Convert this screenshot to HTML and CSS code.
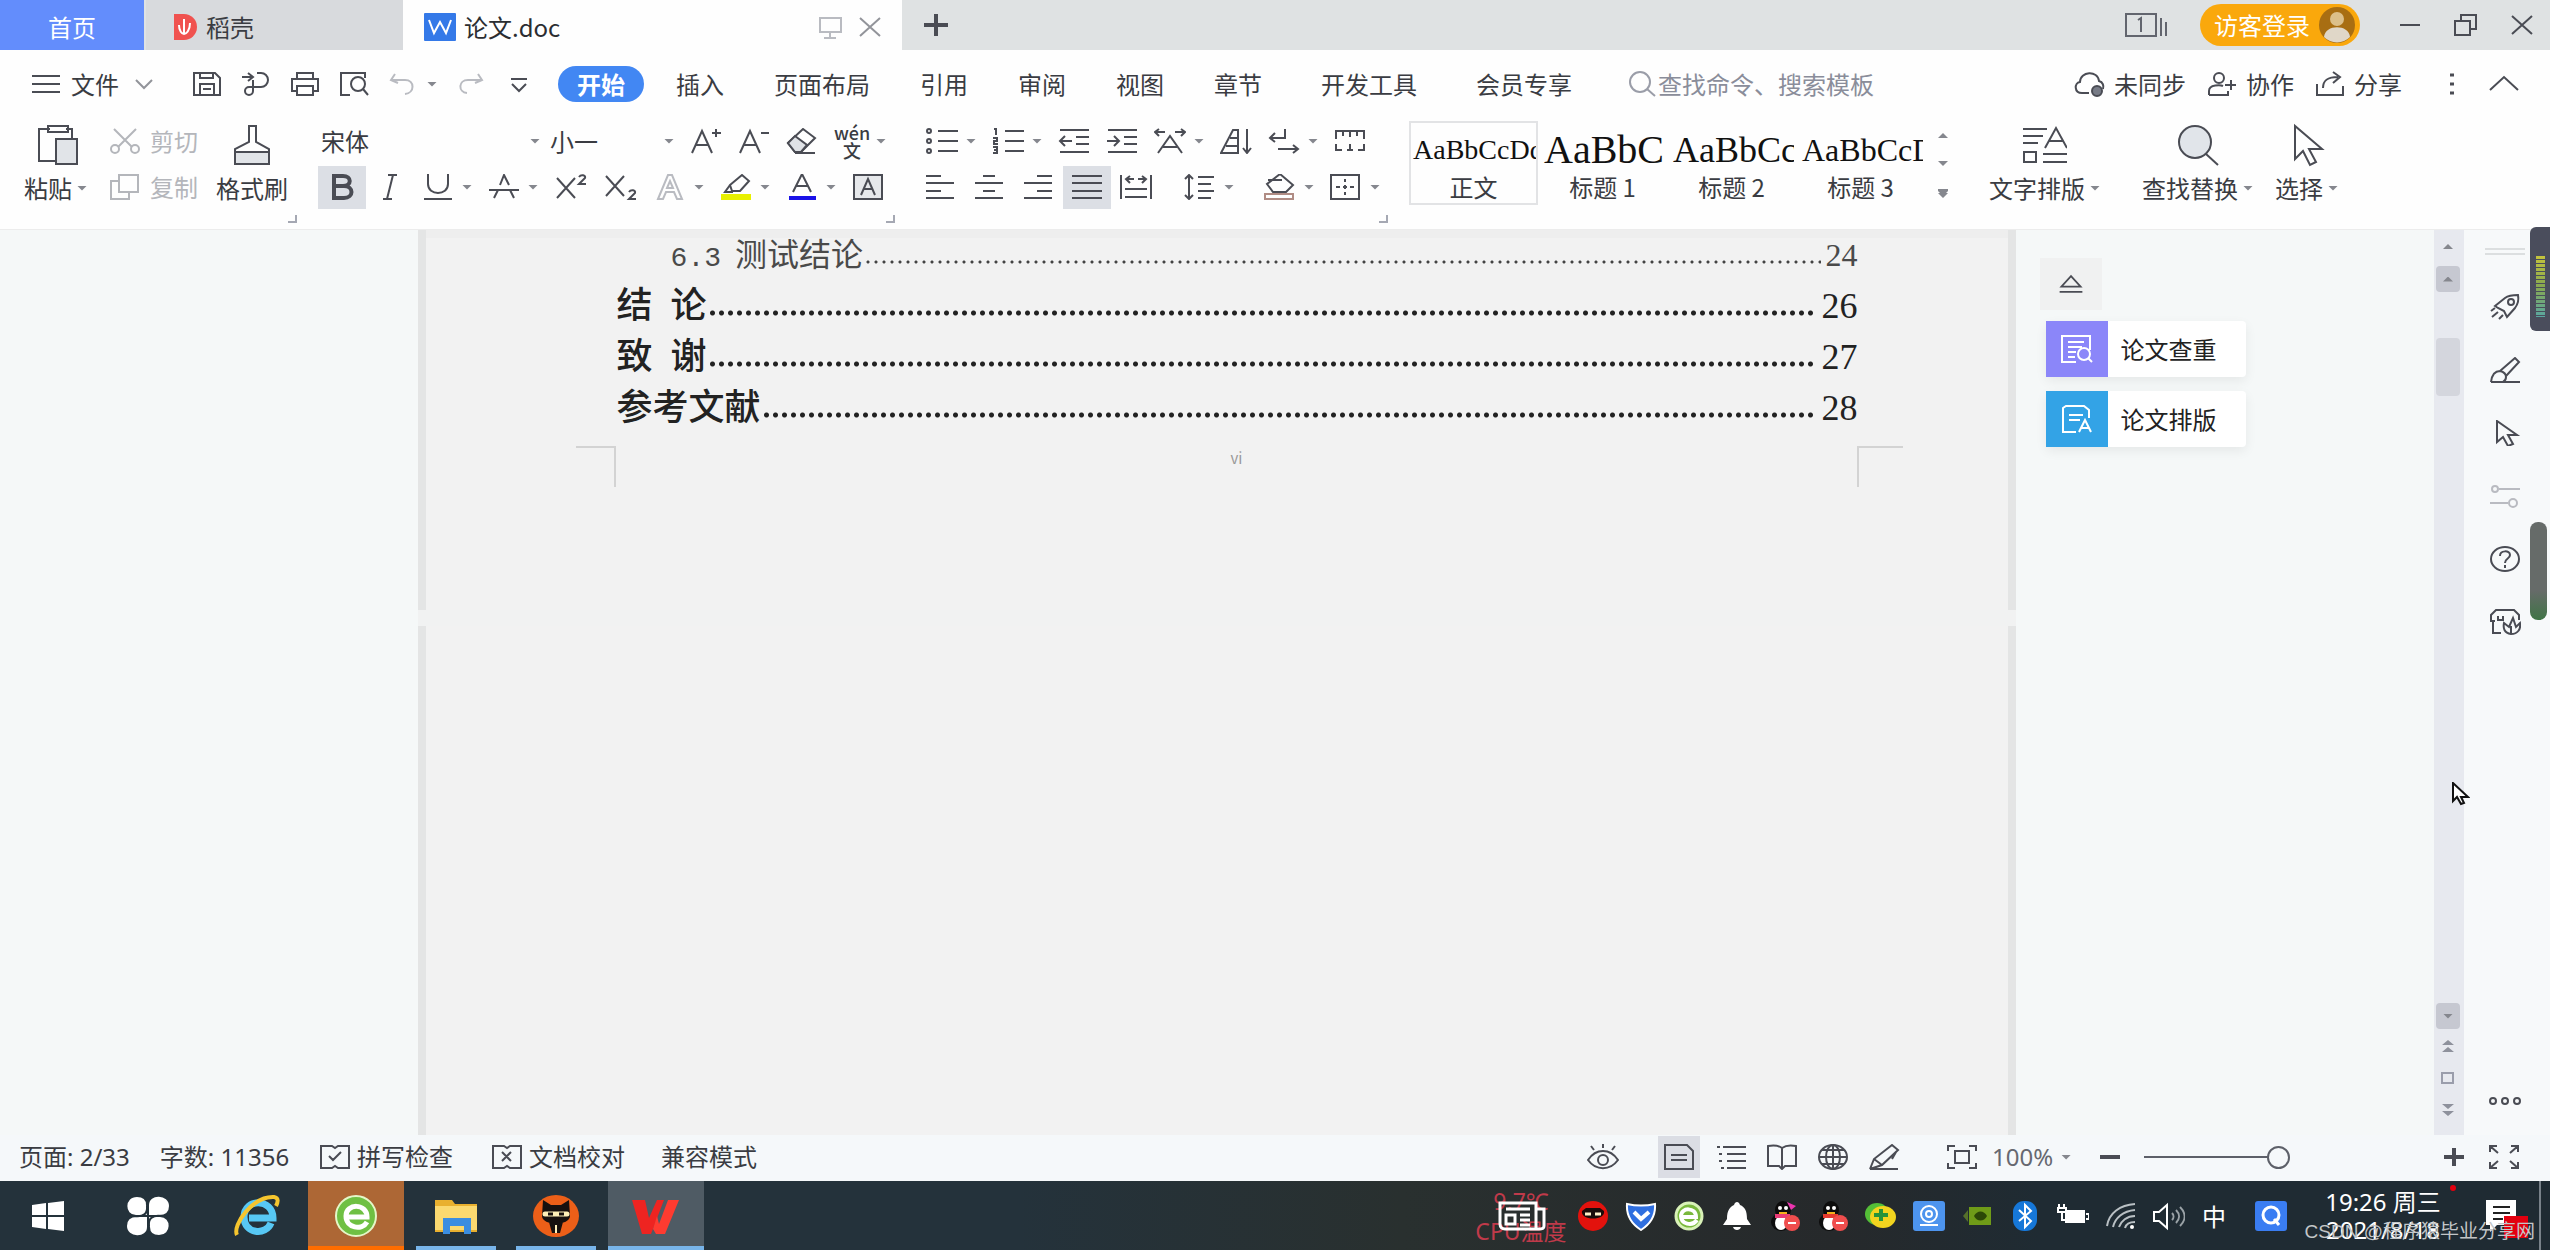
FILE: index.html
```
<!DOCTYPE html>
<html lang="zh-CN">
	<head>
		<meta charset="UTF-8">
		<title>论文.doc</title>
		<link rel="stylesheet" href="styles.css">
	</head>
	<body>
		<!-- 标签栏 -->
		<div class="titlebar">
			<button class="home">首页</button>
			<button class="doctab">
				<svg class="logo small" viewBox="0 0 24 28"><path d="M0 1h10a13 13 0 0 1 0 26H0z" fill="#f0524f"/><path d="M10 6v15M5 12c0 6 3 9 5 9s6-3 6-11" fill="none" stroke="#fff" stroke-width="2"/></svg>
				<span>稻壳</span>
			</button>
			<div class="doctab current">
				<svg class="logo" viewBox="0 0 32 28"><rect width="32" height="28" rx="1" fill="#3479e8"/><path d="M5 7l5 13 6-11 6 11 5-13" fill="none" stroke="#fff" stroke-width="2"/></svg>
				<span>论文.doc</span>
				<svg class="ico pale push" viewBox="0 0 32 26"><path d="M6 4h21v14H6zM16 18v6M10 24h12"/></svg>
				<button class="icon-btn" aria-label="关闭标签"><svg class="ico mid" viewBox="0 0 32 26"><path d="M6 4l20 18M26 4L6 22"/></svg></button>
			</div>
			<button class="newtab" aria-label="新建"><svg class="ico bold" viewBox="0 0 32 26"><path d="M4 13h24M16 2v22"/></svg></button>
			<div class="window">
				<svg class="pages" viewBox="0 0 44 26"><path d="M2 2h30v22H2zM37 6v18M42 10v14M14 8l3-2v14"/></svg>
				<button class="login">访客登录
					<svg class="avatar" viewBox="0 0 38 38"><circle cx="19" cy="19" r="18" fill="#a86e12"/><circle cx="19" cy="13" r="7" fill="#dcc08a"/><path d="M6 31c1-13 25-13 26 0a18 18 0 0 1-26 0z" fill="#e0d7c8"/></svg>
				</button>
				<button class="winbtn" aria-label="最小化"><svg class="ico" viewBox="0 0 32 26"><path d="M6 13h20"/></svg></button>
				<button class="winbtn" aria-label="还原"><svg class="ico" viewBox="0 0 32 26"><path d="M5 9h15v14H5zM11 9V3h15v14h-6"/></svg></button>
				<button class="winbtn" aria-label="关闭"><svg class="ico" viewBox="0 0 32 26"><path d="M6 4l20 18M26 4L6 22"/></svg></button>
			</div>
		</div>

		<!-- 菜单 -->
		<div class="menubar">
			<button class="file">
				<svg class="ico" viewBox="0 0 32 26"><path d="M2 5h28M2 13h28M2 21h28"/></svg>
				文件
				<svg class="chev" viewBox="0 0 18 12"><path d="M1 2l8 8 8-8"/></svg>
			</button>
			<div class="quick">
				<button aria-label="保存"><svg class="ico" viewBox="0 0 32 26"><path d="M3 2h21l5 5v17H3zM9 2v5h13V2M9 24V13h14v11M12 18h8"/></svg></button>
				<button aria-label="输出"><svg class="ico" viewBox="0 0 32 26"><path d="M2 6h10M8 2l5 4-5 4M17 2h4a7 7 0 0 1 0 14h-8M13 9v11a4 4 0 1 1-4-4h4"/></svg></button>
				<button aria-label="打印"><svg class="ico" viewBox="0 0 32 26"><path d="M8 8V2h16v6M8 20H3V8h26v12h-5M8 15h16v9H8z"/></svg></button>
				<button aria-label="打印预览"><svg class="ico" viewBox="0 0 32 26"><path d="M12 24H3V2h24v5M25 18l5 6"/><circle cx="20" cy="13" r="7"/></svg></button>
				<button aria-label="撤销"><svg class="ico pale" viewBox="0 0 32 26"><path d="M8 3L4 9l7 3M5 9h13c10 0 10 13 0 14"/></svg></button>
				<i class="caret"></i>
				<button aria-label="恢复"><svg class="ico pale" viewBox="0 0 32 26"><path d="M24 3l4 6-7 3M27 9H14C4 9 4 21 13 22"/></svg></button>
				<button aria-label="更多"><svg class="ico" viewBox="0 0 32 26"><path d="M8 8h16M9 13l7 7 7-7"/></svg></button>
			</div>
			<nav class="tabs">
				<button class="on">开始</button>
				<button>插入</button>
				<button>页面布局</button>
				<button>引用</button>
				<button>审阅</button>
				<button>视图</button>
				<button>章节</button>
				<button class="wide">开发工具</button>
				<button class="wide">会员专享</button>
			</nav>
			<label class="search">
				<svg class="ico" viewBox="0 0 32 26"><circle cx="14" cy="11" r="10"/><path d="M21 18l8 7"/></svg>
				<input type="text" placeholder="查找命令、搜索模板" aria-label="查找命令">
			</label>
			<div class="share">
				<button><svg class="ico" viewBox="0 0 32 26"><path d="M15 22H8C0 22 0 12 6 11C6 0 24-1 25 10c4 1 5 5 4 8"/><circle cx="23" cy="20" r="5" fill="#777b86"/></svg>未同步</button>
				<button><svg class="ico" viewBox="0 0 32 26"><circle cx="13" cy="7" r="5"/><path d="M3 24v-4c0-7 12-6 14-5M3 24h19v-4M19 14h11M25 9v10"/></svg>协作</button>
				<button><svg class="ico" viewBox="0 0 32 26"><path d="M3 13v11h26v-9M9 17c0-8 5-11 15-11M19 1l7 5-7 6"/></svg>分享</button>
				<button class="dots" aria-label="更多"><svg class="ico" viewBox="0 0 32 26"><path d="M14 4h4M14 13h4M14 22h4" stroke-width="3"/></svg></button>
				<button aria-label="收起"><svg class="ico" viewBox="0 0 32 26"><path d="M2 19L16 6l14 13"/></svg></button>
			</div>
		</div>

		<!-- 功能区 -->
		<div class="ribbon">
			<div class="group clip">
				<button class="big">
					<svg viewBox="0 0 44 44"><path d="M14 6H3v32h17M30 6h6v10M12 3h20v6H12z"/><path d="M20 16h21v25H20z" fill="#e1e4e8"/></svg>
					<span>粘贴<i class="caret"></i></span>
				</button>
				<div class="stack">
					<button class="dim"><svg class="ico" viewBox="0 0 32 26"><path d="M5 1l18 18M27 1L9 19"/><circle cx="6" cy="21" r="4"/><circle cx="26" cy="21" r="4"/></svg>剪切</button>
					<button class="dim"><svg class="ico" viewBox="0 0 32 26"><path d="M10 1h19v17H10zM10 7H2v18h18v-7"/></svg>复制</button>
				</div>
				<button class="big brush">
					<svg viewBox="0 0 44 44"><path d="M19 3h7v16l13 7v15H5V26l14-7z"/><path d="M5 29h34v12H5z" fill="#e1e4e8"/></svg>
					<span>格式刷</span>
				</button>
				<i class="corner"></i>
			</div>

			<div class="group font">
				<div class="row">
					<select class="face" aria-label="字体"><option>宋体</option></select><i class="caret"></i>
					<select class="size" aria-label="字号"><option>小一</option></select><i class="caret"></i>
					<button aria-label="增大字号"><svg class="ico" viewBox="0 0 32 26"><path d="M2 25L12 3l10 22M6 17h12M22 5h9M26 1v8"/></svg></button>
					<button aria-label="减小字号"><svg class="ico" viewBox="0 0 32 26"><path d="M2 25L12 3l10 22M6 17h12M23 5h8"/></svg></button>
					<button aria-label="清除格式"><svg class="ico" viewBox="0 0 32 26"><path d="M2 15L17 1l12 9-14 14H9zM9 25h20"/><path d="M2 15l7-7 12 9-6 7H9z" fill="#dfe2e6"/></svg></button>
					<button class="pinyin" aria-label="拼音指南"><b>wén</b><b>文</b></button><i class="caret"></i>
				</div>
				<div class="row">
					<button class="on" aria-label="加粗"><svg class="ico" viewBox="0 0 32 26"><path d="M8 2h9c9 0 9 10 0 10H8zM8 12h10c10 0 10 12 0 12H8z" stroke-width="4"/></svg></button>
					<button aria-label="倾斜"><svg class="ico" viewBox="0 0 32 26"><path d="M14 1h9M9 25h9M19 1l-6 24"/></svg></button>
					<button aria-label="下划线"><svg class="ico" viewBox="0 0 32 26"><path d="M6 0v10c0 12 20 12 20 0V0M2 25h28"/></svg></button><i class="caret"></i>
					<button aria-label="删除线"><svg class="ico" viewBox="0 0 32 26"><path d="M6 24l4-8M12 11l4-10 5 10M22 16l4 8M1 16h30"/></svg></button><i class="caret"></i>
					<button class="xs" aria-label="上标"><svg class="ico" viewBox="0 0 32 26"><path d="M2 4l18 20M20 4L2 24M24 3c2-3 7-2 6 1l-6 6h7"/></svg></button>
					<button class="xs" aria-label="下标"><svg class="ico" viewBox="0 0 32 26"><path d="M1 2l18 20M19 2L1 22M24 18c2-3 7-2 6 1l-6 6h7"/></svg></button>
					<button aria-label="文字效果"><svg class="ico pale" viewBox="0 0 32 26"><path d="M4 25L14 1h4l10 24h-5l-3-7h-8l-3 7zM13 14h6l-3-7z"/></svg></button><i class="caret"></i>
					<button aria-label="突出显示"><svg class="ico" viewBox="0 0 32 26"><path d="M10 11L22 1l7 6-9 10h-8zM10 11l-5 7h8"/><path d="M1 23h30" stroke="#e8f000" stroke-width="6"/></svg></button><i class="caret"></i>
					<button aria-label="字体颜色"><svg class="ico" viewBox="0 0 32 26"><path d="M7 18L16 0l9 18M10 12h12"/><path d="M3 24h27" stroke="#1a12e8" stroke-width="4"/></svg></button><i class="caret"></i>
					<button aria-label="字符底纹"><svg class="ico" viewBox="0 0 32 26"><path d="M2 1h28v24H2z" fill="#e6e8eb"/><path d="M9 21l7-16 7 16M11 15h10"/></svg></button>
				</div>
				<i class="corner"></i>
			</div>

			<div class="group para">
				<div class="row">
					<button aria-label="项目符号"><svg class="ico" viewBox="0 0 32 26"><path d="M12 3h20M12 13h20M12 23h20"/><circle cx="3" cy="3" r="2"/><circle cx="3" cy="13" r="2"/><circle cx="3" cy="23" r="2"/></svg></button><i class="caret"></i>
					<button aria-label="编号"><svg class="ico" viewBox="0 0 32 26"><path d="M13 3h19M13 13h19M13 23h19M2 1h2v6M1 10h4v3H2v3h4M1 19h4v6H1M2 22h3"/></svg></button><i class="caret"></i>
					<button aria-label="减少缩进"><svg class="ico" viewBox="0 0 32 26"><path d="M2 2h29M18 9h13M18 16h13M2 24h29M2 13h12M7 8l-5 5 5 5"/></svg></button>
					<button aria-label="增加缩进"><svg class="ico" viewBox="0 0 32 26"><path d="M2 2h29M18 9h13M18 16h13M2 24h29M1 13h12M8 8l5 5-5 5"/></svg></button>
					<button aria-label="中文版式"><svg class="ico" viewBox="0 0 32 26"><path d="M4 25l12-17 12 17M9 19h14M1 4h10M5 1L1 4l4 4M21 4h10M27 1l4 3-4 4"/></svg></button><i class="caret"></i>
					<button aria-label="排序"><svg class="ico" viewBox="0 0 32 26"><path d="M1 25L13 2h5v23zM6 18h12M10 10h8M27 1v24M23 20l4 5 4-5"/></svg></button>
					<button aria-label="换行标记"><svg class="ico" viewBox="0 0 32 26"><path d="M17 1v9H2M7 5l-5 5 5 4M10 21h20M25 17l5 4-5 4"/></svg></button><i class="caret"></i>
					<button aria-label="制表位"><svg class="ico" viewBox="0 0 32 26"><path d="M2 11V3h28v8M9 3v5M16 3v6M23 3v5M2 16v6h6M13 22h6M16 16v6M24 22h6v-6"/></svg></button>
				</div>
				<div class="row tight">
					<button aria-label="左对齐"><svg class="ico" viewBox="0 0 32 26"><path d="M2 2h15M2 9h28M2 17h15M2 24h28"/></svg></button>
					<button aria-label="居中"><svg class="ico" viewBox="0 0 32 26"><path d="M10 2h12M2 9h28M10 17h12M2 24h28"/></svg></button>
					<button aria-label="右对齐"><svg class="ico" viewBox="0 0 32 26"><path d="M15 2h15M2 9h28M15 17h15M2 24h28"/></svg></button>
					<button class="on" aria-label="两端对齐"><svg class="ico" viewBox="0 0 32 26"><path d="M1 2h30M1 9h30M1 17h30M1 24h30"/></svg></button>
					<button aria-label="分散对齐"><svg class="ico" viewBox="0 0 32 26"><path d="M1 1v24M31 1v24M5 15h22M5 23h22M6 5h8M10 2L6 5l4 4M18 5h8M22 2l4 3-4 4"/></svg></button>
					<button class="apart" aria-label="行距"><svg class="ico" viewBox="0 0 32 26"><path d="M6 1v24M2 5l4-4 4 4M2 21l4 4 4-4M15 3h16M15 10h13M15 17h16M15 24h13"/></svg></button><i class="caret"></i>
					<button class="apart" aria-label="底纹"><svg class="ico" viewBox="0 0 32 26"><path d="M5 6h14M17 0L4 10l6 8h13l7-7L17 0M30 11l-9 9"/><path d="M2 20h28v5H2z" stroke="#b08c84"/></svg></button><i class="caret"></i>
					<button aria-label="边框"><svg class="ico" viewBox="0 0 32 26"><path d="M2 1h28v24H2zM16 5v3M16 11v4M16 18v3M7 13h4M21 13h4M14 13h4"/></svg></button><i class="caret"></i>
				</div>
				<i class="corner"></i>
			</div>

			<div class="styles">
				<button class="current"><span class="s0">AaBbCcDd</span><em>正文</em></button>
				<button><span class="s1">AaBbC</span><em>标题 1</em></button>
				<button><span class="s2">AaBbCc</span><em>标题 2</em></button>
				<button><span class="s3">AaBbCcD</span><em>标题 3</em></button>
				<div class="spin"><i class="caret up"></i><i class="caret"></i><i class="caret line"></i></div>
			</div>

			<div class="tools">
				<button class="big">
					<svg viewBox="0 0 44 44"><path d="M0 6h24M0 13h20M0 20h15M22 25L33 5l11 20M26 18h14M1 29h12v10H1zM20 31h24M20 39h24"/></svg>
					<span>文字排版<i class="caret"></i></span>
				</button>
				<button class="big">
					<svg viewBox="0 0 44 44"><circle cx="19" cy="19" r="16" fill="#e1e5ea"/><path d="M30 31l12 11"/></svg>
					<span>查找替换<i class="caret"></i></span>
				</button>
				<button class="big last">
					<svg viewBox="0 0 44 44"><path d="M10 3v33l8-8 7 14 6-3-7-13h13z"/></svg>
					<span>选择<i class="caret"></i></span>
				</button>
			</div>
		</div>

		<!-- 文档区 -->
		<div class="work">
			<div class="gutter"></div>
			<main class="paper">
				<section class="sheet first">
					<ul class="toc">
						<li class="sub"><a href="#p24"><tt>6.3</tt>测试结论</a><span class="leader"></span><span>24</span></li>
						<li><a href="#p26">结&ensp;论</a><span class="leader"></span><span>26</span></li>
						<li><a href="#p27">致&ensp;谢</a><span class="leader"></span><span>27</span></li>
						<li><a href="#p28">参考文献</a><span class="leader"></span><span>28</span></li>
					</ul>
					<div class="marks"><i></i><small>vi</small><i class="r"></i></div>
				</section>
				<section class="sheet"></section>
			</main>
			<div class="gutter">
				<div class="side">
					<button class="fold" aria-label="折叠"><svg class="ico" viewBox="0 0 32 26"><path d="M16 4L5 16h22zM3 22h26"/></svg></button>
					<button class="card">
						<span class="tile violet"><svg viewBox="0 0 34 30"><path d="M16 28H2V2h28v14M8 8h16M8 13h14M8 18h8M8 23h7M28 24l4 4"/><circle cx="24" cy="20" r="6"/></svg></span>论文查重
					</button>
					<button class="card">
						<span class="tile azure"><svg viewBox="0 0 34 30"><path d="M16 28H3V4l3-2h18l5 4v8M9 11h14M9 16h11M19 28l6-12 6 12M21 24h8"/></svg></span>论文排版
					</button>
				</div>
			</div>
			<div class="scrollbar">
				<i class="caret up"></i>
				<b class="arrow"><i class="caret up"></i></b>
				<b class="thumb"></b>
				<b class="arrow down"><i class="caret"></i></b>
				<svg viewBox="0 0 16 14"><path d="M2 6l6-5 6 5zM2 13l6-5 6 5z" fill="#8e919c"/></svg>
				<svg viewBox="0 0 16 14"><path d="M2 2h11v10H2z" fill="none" stroke="#9a9dab" stroke-width="2"/></svg>
				<svg viewBox="0 0 16 14"><path d="M2 1l6 5 6-5zM2 8l6 5 6-5z" fill="#8e919c"/></svg>
			</div>
			<aside class="rail">
				<i class="grip"></i>
				<button aria-label="快捷"><svg class="ico" viewBox="0 0 32 26"><path d="M6 12L16 4c4-3 9-3 13-3 1 5 0 9-3 13l-8 9-3-6-6-3zM2 17l4-3M3 23l6-5M10 25l4-4"/><circle cx="22" cy="8" r="3"/></svg></button>
				<button aria-label="样式"><svg class="ico" viewBox="0 0 32 26"><path d="M11 14L26 1l4 4-13 14M2 25c1-8 4-11 9-11 4 1 6 3 6 6 0 2-1 4-3 5M2 25h29"/></svg></button>
				<button aria-label="选择窗格"><svg class="ico" viewBox="0 0 32 26"><path d="M8 1v21l6-5 5 9 5-2-5-9h9z"/></svg></button>
				<button aria-label="属性"><svg class="ico pale" viewBox="0 0 32 26"><circle cx="6" cy="6" r="3"/><circle cx="24" cy="20" r="4"/><path d="M10 6h21M1 20h18"/></svg></button>
				<button aria-label="帮助"><svg class="ico" viewBox="0 0 32 26"><ellipse cx="16" cy="13" rx="14" ry="12"/><path d="M11 10c0-6 10-6 10-1 0 4-5 3-5 8M16 19v3"/></svg></button>
				<button aria-label="皮肤"><svg class="ico" viewBox="0 0 32 26"><path d="M4 12v12h8M30 11V6l-5-5H7L2 6v6h4M9 7v4h5V7"/><path d="M22 25c-7-1-8-6-7-11l5 4 4-9 3 9 4-4c1 6-2 11-9 11zM22 25v-8" fill="#f7f9fa"/></svg></button>
				<button class="end" aria-label="更多"><svg class="ico" viewBox="0 0 32 26"><circle cx="4" cy="13" r="3"/><circle cx="16" cy="13" r="3"/><circle cx="28" cy="13" r="3"/></svg></button>
				<i class="meter top"></i>
				<i class="meter low"></i>
			</aside>
			<svg class="pointer" viewBox="0 0 18 24"><path d="M1 1v18l4-4 4 7 3-1-3-6h7z" fill="#fff" stroke="#111" stroke-width="2"/></svg>
		</div>

		<!-- 状态栏 -->
		<div class="status">
			<span>页面: 2/33</span>
			<span>字数: 11356</span>
			<button><svg class="ico" viewBox="0 0 32 26"><path d="M2 2h11l3 2 3-2h11v22H19l-3-2-3 2H2zM10 12l4 4 8-8"/></svg>拼写检查</button>
			<button class="proof"><svg class="ico" viewBox="0 0 32 26"><path d="M2 2h11l3 2 3-2h11v22H19l-3-2-3 2H2zM11 8l9 9M20 8l-9 9"/></svg>文档校对</button>
			<span class="compat">兼容模式</span>
			<div class="views">
				<button class="eye" aria-label="护眼模式"><svg class="ico" viewBox="0 0 32 26"><path d="M1 16c8-12 22-12 30 0-8 11-22 11-30 0zM16 0v4M4 2l3 4M28 2l-3 4"/><circle cx="16" cy="16" r="5"/></svg></button>
				<button class="on" aria-label="页面视图"><svg class="ico" viewBox="0 0 32 26"><path d="M2 1h22l6 6v18H2zM8 11h16M8 16h16"/></svg></button>
				<button aria-label="大纲"><svg class="ico" viewBox="0 0 32 26"><path d="M2 3h3M8 3h23M4 10h3M12 10h19M4 17h3M12 17h19M6 24h3M12 24h19"/></svg></button>
				<button aria-label="阅读版式"><svg class="ico" viewBox="0 0 32 26"><path d="M16 4c-4-3-9-3-14-2v20h11l3 3 3-3h11V2c-5-1-10-1-14 2zv20"/></svg></button>
				<button aria-label="Web版式"><svg class="ico" viewBox="0 0 32 26"><ellipse cx="16" cy="13" rx="14" ry="12"/><ellipse cx="16" cy="13" rx="7" ry="12"/><path d="M2 13h28M16 1v24M5 6h22M5 20h22"/></svg></button>
				<button aria-label="写作模式"><svg class="ico" viewBox="0 0 32 26"><path d="M2 25l4-10L24 1l6 5-16 15-12 4h28M6 15l8 6M28 8l-4 7"/></svg></button>
			</div>
			<div class="zoom">
				<svg class="ico" viewBox="0 0 32 26"><path d="M2 7V2h7M23 2h7v5M2 19v5h7M23 24h7v-5M9 7h14v12H9z"/></svg>
				<button class="pct">100%<i class="caret"></i></button>
				<button aria-label="缩小"><svg class="ico bold" viewBox="0 0 32 26"><path d="M6 13h20"/></svg></button>
				<input type="range" min="0" max="100" value="48" aria-label="显示比例">
				<button aria-label="放大"><svg class="ico bold" viewBox="0 0 32 26"><path d="M6 13h20M16 4v18"/></svg></button>
				<button class="full" aria-label="全屏"><svg class="ico" viewBox="0 0 32 26"><path d="M2 8V2h7M2 2l8 7M23 2h7v6M30 2l-8 7M2 18v6h7M2 24l8-7M23 24h7v-6M30 24l-8-7"/></svg></button>
			</div>
		</div>

		<!-- 任务栏 -->
		<div class="taskbar">
			<div class="apps">
				<button aria-label="开始"><svg viewBox="0 0 50 44"><path d="M9 11l14-2v12H9zM25 9l16-2v14H25zM9 23h14v12L9 33zM25 23h16v14l-16-2z" fill="#fff"/></svg></button>
				<button aria-label="应用中心"><svg viewBox="0 0 50 44"><g fill="#fff" stroke="#24323b" stroke-width="2"><path d="M25 22H13C0 22 0 2 14 2c7 0 10 4 10 9z"/><path d="M25 22V11c0-13 22-12 22 1 0 7-5 10-11 10z"/><path d="M25 22h12c13 0 13 20-1 20-7 0-10-4-10-9z"/><path d="M25 22v11c0 13-22 12-22-1 0-7 5-10 11-10z"/></g><path d="M12 22c8 1 13-2 12-10M38 22c-8-1-13 2-12 10" fill="none" stroke="#24323b" stroke-width="2"/></svg></button>
				<button class="ie" aria-label="Internet Explorer"><svg viewBox="0 0 50 44"><path d="M40 29c-5 13-27 11-27-6 0-19 29-19 29 1H18" fill="none" stroke="#57c8f4" stroke-width="7"/><path d="M6 41C1 31 22 2 43 3c5 1 4 5 2 9" fill="none" stroke="#f5c52e" stroke-width="4"/></svg></button>
				<button class="hot" aria-label="浏览器"><svg viewBox="0 0 50 44"><circle cx="25" cy="22" r="20" fill="#6fc043" stroke="#e4f7c8" stroke-width="2"/><path d="M36 28c-5 9-21 6-21-6 0-13 21-13 21 1H17" fill="none" stroke="#fff" stroke-width="5"/></svg></button>
				<button class="run" aria-label="资源管理器"><svg viewBox="0 0 50 44"><path d="M4 6h17l3 4h22v28H4z" fill="#e9b02f"/><path d="M4 12h42v24H4z" fill="#fbd970"/><path d="M12 24h28v16h-7v-8H19v8h-7z" fill="#3b8de0"/></svg></button>
				<button class="run" aria-label="忍者"><svg viewBox="0 0 50 44"><ellipse cx="25" cy="22" rx="23" ry="21" fill="#ec5f18"/><path d="M12 6l8 5h10l8-5 1 16c0 10-28 10-28 0zM18 28h14l-3 11h-8z" fill="#17110f"/><path d="M14 20h22" stroke="#fff0b8" stroke-width="5" stroke-linecap="round"/><path d="M17 20h5M28 20h5" stroke="#17110f" stroke-width="3"/><path d="M25 31v8" stroke="#fff0b8" stroke-width="2"/></svg></button>
				<button class="open" aria-label="WPS"><svg viewBox="0 0 50 44"><path d="M1 6h13l4 18 8-18h7L20 40h-9z" fill="#ee2421"/><path d="M48 6H37l-9 24-2-8-4 13 3 5h9z" fill="#ff3b30"/></svg></button>
			</div>
			<div class="tray">
				<div class="cpu"><span>9.7℃</span><span>CPU温度</span>
					<svg viewBox="0 0 50 32"><path d="M3 3h36v26H8c-3 0-5-2-5-5zM39 9h8v17c0 2-2 3-5 3h-4M9 9h24M9 15h9v9H9zM23 15h10M23 20h10M23 25h10"/></svg>
				</div>
				<svg viewBox="0 0 32 30"><circle cx="16" cy="15" r="15" fill="#e3120d"/><path d="M5 10l4-3h14l4 3c2 10-24 10-22 0z" fill="#190d0b"/><path d="M8 13h6M18 13h6" stroke="#fff0c8" stroke-width="3"/></svg>
				<svg viewBox="0 0 32 30"><path d="M2 3c9 2 19 2 28 0 1 14-6 21-14 26C8 24 1 17 2 3z" fill="#2f6fe0" stroke="#fff" stroke-width="2"/><path d="M9 11l7 7 8-7" fill="none" stroke="#fff" stroke-width="4"/></svg>
				<svg viewBox="0 0 32 30"><circle cx="16" cy="15" r="13" fill="#79b83c" stroke="#d9f2b8" stroke-width="3"/><path d="M24 19c-5 7-16 4-16-4 0-9 15-9 15 1H10" fill="none" stroke="#fff" stroke-width="4"/></svg>
				<svg viewBox="0 0 32 30"><path d="M2 24l4-6c0-9 3-12 7-14 1-4 5-4 6 0 5 2 7 6 7 14l4 6zM12 26h8c-1 4-7 4-8 0z" fill="#fff"/></svg>
				<svg viewBox="0 0 32 30"><ellipse cx="14" cy="9" rx="8" ry="9" fill="#0c0c0c"/><ellipse cx="12" cy="21" rx="10" ry="9" fill="#0c0c0c"/><ellipse cx="12" cy="22" rx="6" ry="7" fill="#fff"/><path d="M6 15h15" stroke="#e93b76" stroke-width="4"/><circle cx="23" cy="22" r="8" fill="#ef4d4d"/><path d="M19 22h8" stroke="#fff" stroke-width="2"/><circle cx="11" cy="7" r="2" fill="#fff"/><circle cx="17" cy="7" r="2" fill="#fff"/><path d="M10 12h8" stroke="#f2b11d" stroke-width="2"/><path d="M18 1l9 4-5 4z" fill="#ed35b0"/></svg>
				<svg viewBox="0 0 32 30"><ellipse cx="14" cy="9" rx="8" ry="9" fill="#0c0c0c"/><ellipse cx="12" cy="21" rx="10" ry="9" fill="#0c0c0c"/><ellipse cx="12" cy="22" rx="6" ry="7" fill="#fff"/><path d="M6 15h15" stroke="#e63b2f" stroke-width="4"/><circle cx="23" cy="22" r="8" fill="#ef4d4d"/><path d="M19 22h8" stroke="#fff" stroke-width="2"/><circle cx="11" cy="7" r="2" fill="#fff"/><circle cx="17" cy="7" r="2" fill="#fff"/><path d="M10 12h8" stroke="#f2b11d" stroke-width="2"/></svg>
				<svg viewBox="0 0 32 30"><ellipse cx="12" cy="13" rx="12" ry="11" fill="#54be37"/><ellipse cx="18" cy="16" rx="13" ry="11" fill="#f2d41f"/><path d="M9 14h14M16 8v12" stroke="#26933b" stroke-width="4"/></svg>
				<svg viewBox="0 0 32 30"><rect width="32" height="30" rx="3" fill="#4d94ee"/><g fill="none" stroke="#fff" stroke-width="2"><circle cx="16" cy="13" r="8"/><circle cx="16" cy="13" r="3"/><path d="M7 24h18"/></g></svg>
				<svg viewBox="0 0 32 30"><path d="M8 6h22v18H8z" fill="#6f9b18"/><path d="M13 15c3-6 10-6 13 0-3 6-10 6-13 0z" fill="#2c4707"/><path d="M2 15l5-6v12z" fill="#56712b"/></svg>
				<svg viewBox="0 0 32 30"><rect x="4" width="24" height="30" rx="11" fill="#1677d8"/><path d="M10 9l12 11-6 6V4l6 6-12 10" fill="none" stroke="#fff" stroke-width="2"/></svg>
				<svg viewBox="0 0 32 30"><path d="M8 9h20v13H8z" fill="#fff"/><path d="M29 13h3v5h-3M2 3v4M7 3v4M1 7h8v4H1zM5 11v8h3" fill="none" stroke="#fff" stroke-width="2"/></svg>
				<svg viewBox="0 0 32 30"><g fill="none" stroke="#b9c0c4" stroke-width="2"><path d="M2 25C4 12 15 4 30 3M8 26C10 17 18 10 30 9M14 26c2-6 8-11 16-11M20 27c1-4 5-6 10-6"/></g><circle cx="27" cy="26" r="2" fill="#fff"/></svg>
				<svg viewBox="0 0 32 30"><path d="M1 11h5l8-7v23l-8-7H1z" fill="none" stroke="#fff" stroke-width="2"/><path d="M19 12c2 2 2 5 0 7M23 9c4 4 4 9 0 13M27 6c6 6 6 13 0 19" fill="none" stroke="#9aa2a7" stroke-width="2"/></svg>
				<span class="ime">中</span>
				<svg class="q" viewBox="0 0 32 30"><rect width="32" height="30" rx="3" fill="#3a7df2"/><circle cx="16" cy="14" r="8" fill="none" stroke="#fff" stroke-width="3"/><path d="M19 18l5 6" stroke="#fff" stroke-width="3"/></svg>
				<div class="clock"><span>19:26 周三</span><span>2021/8/18</span></div>
				<div class="notice"><svg viewBox="0 0 46 40"><path d="M3 2h30v25H14l-7 7v-7H3z" fill="#fff"/><path d="M10 9h17M10 15h17M10 21h10" stroke="#222" stroke-width="2"/><path d="M21 18h24v22H21z" fill="#e3000f"/></svg></div>
			</div>
			<i class="dot"></i>
			<span class="mark">CSDN @程序猿毕业分享网</span>
		</div>
	</body>
</html>
```
FILE: styles.css
```
*{
	margin: 0;
	padding: 0;
	box-sizing: border-box;
}
body{
	display: flex;
	flex-direction: column;
	height: 100vh;
	overflow: hidden;
	background: #fefefe;
	color: #3a3c42;
	font-family: "Noto Sans CJK SC", sans-serif;
	font-size: 24px;
	line-height: 32px;
}
button,input,select{
	font: inherit;
	color: inherit;
	background: none;
	border: 0;
	outline: 0;
	white-space: nowrap;
}
button{
	display: flex;
	align-items: center;
	flex: none;
}
ul{
	list-style: none;
}
a{
	color: inherit;
	text-decoration: none;
}
em{
	font-style: normal;
}
svg{
	flex: none;
}
.ico{
	width: 32px;
	height: 26px;
	fill: none;
	stroke: #4a4c54;
	stroke-width: 2;
}
.pale{
	stroke: #b9bbc1;
}
.mid{
	stroke: #92949a;
}
.bold{
	stroke-width: 4;
}
.caret{
	flex: none;
	width: 18px;
	height: 5px;
	background: #85878e;
	clip-path: polygon(0 0, 10px 0, 5px 5px);
}
.caret.up{
	clip-path: polygon(0 5px, 10px 5px, 5px 0);
}

/* 标签栏 */
.titlebar{
	display: flex;
	flex: none;
	height: 50px;
	background: #dfe2e3;
}
.home{
	width: 144px;
	padding-top: 3px;
	justify-content: center;
	background: #638dfc;
	color: #fff;
}
.doctab{
	display: flex;
	align-items: center;
	width: 257px;
	margin-left: 2px;
	padding: 4px 0 0 28px;
	gap: 8px;
	background: #d8dadd;
}
.doctab.current{
	width: 499px;
	margin-left: 0;
	padding: 4px 16px 0 21px;
	background: #fefefe;
	color: #2b2d31;
}
.logo{
	width: 32px;
	height: 28px;
}
.logo.small{
	width: 24px;
}
.push{
	margin-left: auto;
}
.newtab{
	width: 68px;
	justify-content: center;
}
.window{
	display: flex;
	align-items: center;
	margin-left: auto;
}
.pages{
	width: 44px;
	height: 26px;
	margin-right: 32px;
	fill: none;
	stroke: #62656e;
	stroke-width: 2;
}
.login{
	height: 42px;
	margin-right: 22px;
	padding: 0 4px 0 14px;
	gap: 8px;
	border-radius: 21px;
	background: #faa80c;
	color: #fff;
}
.avatar{
	width: 38px;
	height: 38px;
}
.winbtn{
	width: 56px;
	height: 50px;
	justify-content: center;
}

/* 菜单 */
.menubar{
	display: flex;
	flex: none;
	align-items: center;
	height: 68px;
	padding: 0 30px;
}
.file .ico{
	margin-right: 9px;
}
.chev{
	width: 18px;
	height: 12px;
	margin-left: 16px;
	fill: none;
	stroke: #92949a;
	stroke-width: 2;
}
.quick{
	display: flex;
	align-items: center;
	margin: 0 15px 0 29px;
}
.quick button{
	width: 49px;
	justify-content: center;
}
.tabs{
	display: flex;
	align-items: center;
}
.tabs button{
	padding: 0 25px;
}
.tabs .wide{
	margin-left: 9px;
}
.tabs .on{
	width: 86px;
	height: 36px;
	margin-right: 7px;
	padding: 0;
	justify-content: center;
	border-radius: 18px;
	background: #4287f3;
	color: #fff;
	font-weight: bold;
}
.search{
	display: flex;
	align-items: center;
	margin-left: 29px;
}
.search .ico{
	stroke: #9a9da8;
}
.search input{
	width: 240px;
}
.search input::placeholder{
	color: #8a8d9a;
}
.share{
	display: flex;
	align-items: center;
	gap: 20px;
	margin-left: auto;
}
.share button{
	gap: 8px;
}
.share .dots{
	margin-left: 14px;
}

/* 功能区 */
.ribbon{
	display: flex;
	flex: none;
	height: 112px;
	border-bottom: 1px solid #ececec;
}
.group{
	position: relative;
}
.corner{
	position: absolute;
	right: 13px;
	bottom: 6px;
	width: 9px;
	height: 8px;
	border: solid #a5a8b3;
	border-width: 0 2px 2px 0;
}
.row{
	display: flex;
	align-items: center;
	height: 46px;
}
.row button{
	width: 48px;
	height: 43px;
	justify-content: center;
}
.row .xs{
	width: 50px;
}
.row .on{
	background: #dcdfe5;
}
.tight{
	gap: 1px;
}
.tight .caret{
	width: 16px;
}
.row .apart{
	margin-left: 14px;
}
.big{
	flex-direction: column;
	align-items: center;
	height: 92px;
	padding-top: 5px;
}
.big svg{
	width: 44px;
	height: 44px;
	fill: none;
	stroke: #4a4c54;
	stroke-width: 2;
}
.big span{
	display: flex;
	align-items: center;
	height: 42px;
}
.big .caret{
	width: 10px;
	margin-left: 5px;
}
.clip{
	display: flex;
	width: 310px;
	padding-left: 24px;
}
.clip .big{
	align-items: flex-start;
}
.clip .big svg{
	margin-left: 12px;
}
.clip .brush svg{
	margin-left: 14px;
}
.stack{
	margin: 0 18px 0 22px;
}
.dim{
	height: 46px;
	gap: 9px;
	color: #b4b6bb;
}
.dim .ico{
	stroke: #b4b6bb;
}
.font{
	width: 598px;
	padding-left: 8px;
}
.font select{
	appearance: none;
	height: 40px;
}
.face{
	width: 212px;
	padding-left: 3px;
}
.size{
	width: 116px;
	padding-left: 2px;
}
.row .pinyin{
	flex-direction: column;
	margin-left: 2px;
	font-size: 18px;
	line-height: 18px;
}
.pinyin b{
	font-weight: 500;
}
.para{
	width: 493px;
	padding-left: 10px;
}
.para .tight{
	margin-left: -2px;
}
.styles{
	display: flex;
	align-items: flex-start;
	padding: 3px 0 0 8px;
}
.styles button{
	flex-direction: column;
	width: 129px;
	height: 84px;
	overflow: hidden;
	border: 2px solid transparent;
}
.styles .current{
	border-color: #e2e3e5;
}
.styles span{
	width: 100%;
	height: 48px;
	padding-left: 4px;
	overflow: hidden;
	color: #111;
	font-family: "Liberation Serif", serif;
	line-height: 54px;
	text-align: left;
}
.styles em{
	line-height: 32px;
}
.styles .s0{
	padding-left: 2px;
	font-size: 28px;
}
.s1{
	font-size: 40px;
}
.s2{
	font-size: 36px;
}
.s3{
	font-size: 32px;
}
.spin{
	display: flex;
	flex-direction: column;
	gap: 23px;
	margin-left: 13px;
	padding-top: 12px;
}
.spin .line{
	height: 9px;
	clip-path: polygon(0 0, 10px 0, 10px 2px, 8px 4px, 10px 4px, 5px 9px, 0 4px, 2px 4px, 0 2px);
}
.tools{
	display: flex;
	gap: 42px;
	margin-left: 33px;
}
.tools .last{
	margin-left: -20px;
}

/* 文档区 */
.work{
	position: relative;
	display: flex;
	flex: 1;
	min-height: 0;
	background: #f5f8f8;
}
.gutter{
	flex: 1;
}
.paper{
	display: flex;
	flex-direction: column;
	flex: none;
	gap: 16px;
	width: 62.7%;
	background: #f1f2f2;
}
.sheet{
	flex: 1;
	border: solid #e4e5e5;
	border-width: 0 8px;
	background: #f2f2f2;
}
.first{
	flex: none;
	height: 380px;
	padding: 0 151px 0 191px;
	box-shadow: inset 0 8px 0 #eeeeee;
}
.toc{
	color: #222;
	font-family: "Liberation Serif", "Noto Sans CJK SC", serif;
	font-size: 36px;
	line-height: 51px;
}
.toc li{
	display: flex;
	height: 51px;
	white-space: nowrap;
}
.toc a{
	font-weight: 500;
}
.toc .sub{
	padding-left: 54px;
	color: #4a4a4a;
	font-size: 32px;
}
.toc .sub a{
	font-weight: normal;
}
.toc tt{
	margin-right: 14px;
	font-family: "Liberation Mono", monospace;
	font-size: 28px;
}
.leader{
	flex: 1;
	height: 6px;
	margin: 29px 4px 0 1px;
	background: radial-gradient(circle, #222 2px, transparent 3px) 0 0 / 9px 6px repeat-x;
}
.sub .leader{
	background: radial-gradient(circle, #444 1px, transparent 2px) 0 0 / 8px 6px repeat-x;
}
.marks{
	display: flex;
	justify-content: space-between;
	margin: 12px -46px 0 -41px;
	color: #999;
	font-size: 18px;
	line-height: 24px;
}
.marks i{
	width: 40px;
	height: 41px;
	border: solid #d3d3d3;
	border-width: 2px 2px 0 0;
}
.marks .r{
	width: 46px;
	border-width: 2px 0 0 2px;
}
.side{
	padding: 28px 0 0 24px;
}
.fold{
	width: 62px;
	height: 52px;
	justify-content: center;
	background: #f0f1f1;
}
.fold .ico{
	width: 28px;
}
.card{
	height: 56px;
	width: 200px;
	gap: 12px;
	margin: 11px 0 14px 6px;
	border-radius: 4px;
	background: #fff;
	box-shadow: 0 4px 12px #0001;
	color: #222;
}
.card + .card{
	margin-top: 0;
}
.tile{
	display: flex;
	align-items: center;
	justify-content: center;
	width: 62px;
	height: 56px;
}
.tile svg{
	width: 34px;
	height: 30px;
	fill: none;
	stroke: #fff;
	stroke-width: 2;
}
.violet{
	background: #8b86f9;
}
.azure{
	background: #33a3e6;
}
.scrollbar{
	display: flex;
	flex-direction: column;
	align-items: center;
	width: 30px;
	padding: 14px 2px 18px 0;
	background: #e7e9ef;
}
.scrollbar > .caret,
.arrow .caret{
	width: 10px;
}
.arrow{
	display: flex;
	align-items: center;
	justify-content: center;
	width: 24px;
	height: 26px;
	margin-top: 17px;
	border-radius: 4px;
	background: #c6c8d1;
}
.thumb{
	width: 24px;
	height: 58px;
	margin-top: 46px;
	border-radius: 4px;
	background: #d4d6dd;
}
.arrow.down{
	margin-top: auto;
	margin-bottom: -8px;
}
.scrollbar svg{
	width: 16px;
	height: 14px;
	margin-top: 18px;
}
.rail{
	position: relative;
	display: flex;
	flex-direction: column;
	align-items: center;
	width: 86px;
	padding: 18px 5px 16px 0;
	background: #f7f9fa;
}
.grip{
	width: 40px;
	height: 7px;
	border: solid #dcdfe0;
	border-width: 2px 0;
}
.rail button{
	height: 63px;
}
.grip + button{
	margin-top: 20px;
}
.rail .end{
	margin-top: auto;
	height: 36px;
}
.meter{
	position: absolute;
	right: 0;
	width: 20px;
	border-radius: 6px 0 0 6px;
}
.meter.top{
	top: -3px;
	height: 104px;
	background: repeating-linear-gradient(#4a4d5c 0 1px, transparent 1px 4px) 6px 28px / 9px 62px no-repeat, linear-gradient(#c6c43c, #88a850 50%, #5aa6a0) 6px 28px / 9px 62px no-repeat, #4a4d5c;
}
.meter.low{
	top: 292px;
	right: 3px;
	width: 17px;
	height: 98px;
	border-radius: 8px;
	background: linear-gradient(#666b69 70%, #3f7446);
}
.pointer{
	position: absolute;
	right: 80px;
	top: 552px;
	width: 18px;
	height: 24px;
}

/* 状态栏 */
.status{
	display: flex;
	flex: none;
	align-items: center;
	height: 46px;
	padding: 0 30px 2px 19px;
	gap: 30px;
	background: #f5f8fa;
	font-family: "Noto Sans", "Noto Sans CJK SC", sans-serif;
}
.status button{
	gap: 6px;
}
.status .proof{
	margin-left: 8px;
}
.status .compat{
	margin-left: 6px;
}
.views{
	display: flex;
	align-items: center;
	margin-left: auto;
	margin-right: 7px;
}
.views button{
	width: 51px;
	height: 42px;
	justify-content: center;
}
.views .eye{
	margin-right: 30px;
}
.views .on{
	width: 42px;
	margin-right: 5px;
	background: #dbdde4;
}
.zoom{
	display: flex;
	align-items: center;
	gap: 14px;
	color: #666870;
}
.zoom .pct{
	width: 88px;
	gap: 8px;
}
.zoom input{
	appearance: none;
	width: 280px;
	height: 24px;
	margin-left: 4px;
	background: linear-gradient(#5d6069, #5d6069) 0 11px / 48% 2px no-repeat;
}
.zoom input::-webkit-slider-thumb{
	appearance: none;
	width: 23px;
	height: 23px;
	border: 2px solid #5d6069;
	border-radius: 50%;
	background: #f5f8fa;
}
.zoom .full{
	margin-left: 4px;
}

/* 任务栏 */
.taskbar{
	position: relative;
	display: flex;
	flex: none;
	justify-content: space-between;
	height: 69px;
	background: linear-gradient(90deg, #24323b 0 40%, #29302f 55%, #26292b 72%, #1f2b33 80%);
}
.apps{
	display: flex;
	gap: 4px;
}
.apps button{
	width: 96px;
	justify-content: center;
}
.apps svg{
	width: 50px;
	height: 44px;
}
.apps .ie{
	margin-left: 8px;
}
.apps .hot{
	background: linear-gradient(#ad6735 65px, #ff6d00 65px);
}
.apps .run{
	background: linear-gradient(#78b5ea, #78b5ea) center bottom / 80px 4px no-repeat;
}
.apps .open{
	background: linear-gradient(#4f5b64 65px, #78b5ea 65px);
}
.tray{
	display: flex;
	align-items: center;
	padding-right: 9px;
	color: #fff;
}
.tray > svg{
	width: 32px;
	height: 30px;
	margin: 0 8px;
}
.tray .q{
	margin: 0 14px;
}
.cpu{
	position: relative;
	display: flex;
	flex-direction: column;
	align-items: center;
	width: 96px;
	color: #c03a4a;
	font-family: "Noto Sans", "Noto Sans CJK SC", sans-serif;
	font-size: 23px;
	line-height: 30px;
	white-space: nowrap;
}
.cpu svg{
	position: absolute;
	left: 24px;
	top: 14px;
	width: 50px;
	height: 32px;
	fill: none;
	stroke: #fff;
	stroke-width: 3;
}
.ime{
	width: 48px;
	margin-left: -3px;
	margin-right: 3px;
	text-align: center;
}
.clock{
	display: flex;
	flex-direction: column;
	align-items: center;
	width: 164px;
	font-family: "Noto Sans", "Noto Sans CJK SC", sans-serif;
	line-height: 28px;
}
.notice{
	width: 76px;
	height: 69px;
	padding: 17px 0 0 18px;
	border-right: 2px solid #79828a;
}
.notice svg{
	width: 46px;
	height: 40px;
}
.dot{
	position: absolute;
	right: 94px;
	top: 4px;
	width: 6px;
	height: 6px;
	border-radius: 3px;
	background: #e3000f;
}
.mark{
	position: absolute;
	right: 15px;
	bottom: 2px;
	color: #c3c6c8;
	font-family: "Liberation Sans", "Noto Sans CJK SC", sans-serif;
	font-size: 19px;
}
```
